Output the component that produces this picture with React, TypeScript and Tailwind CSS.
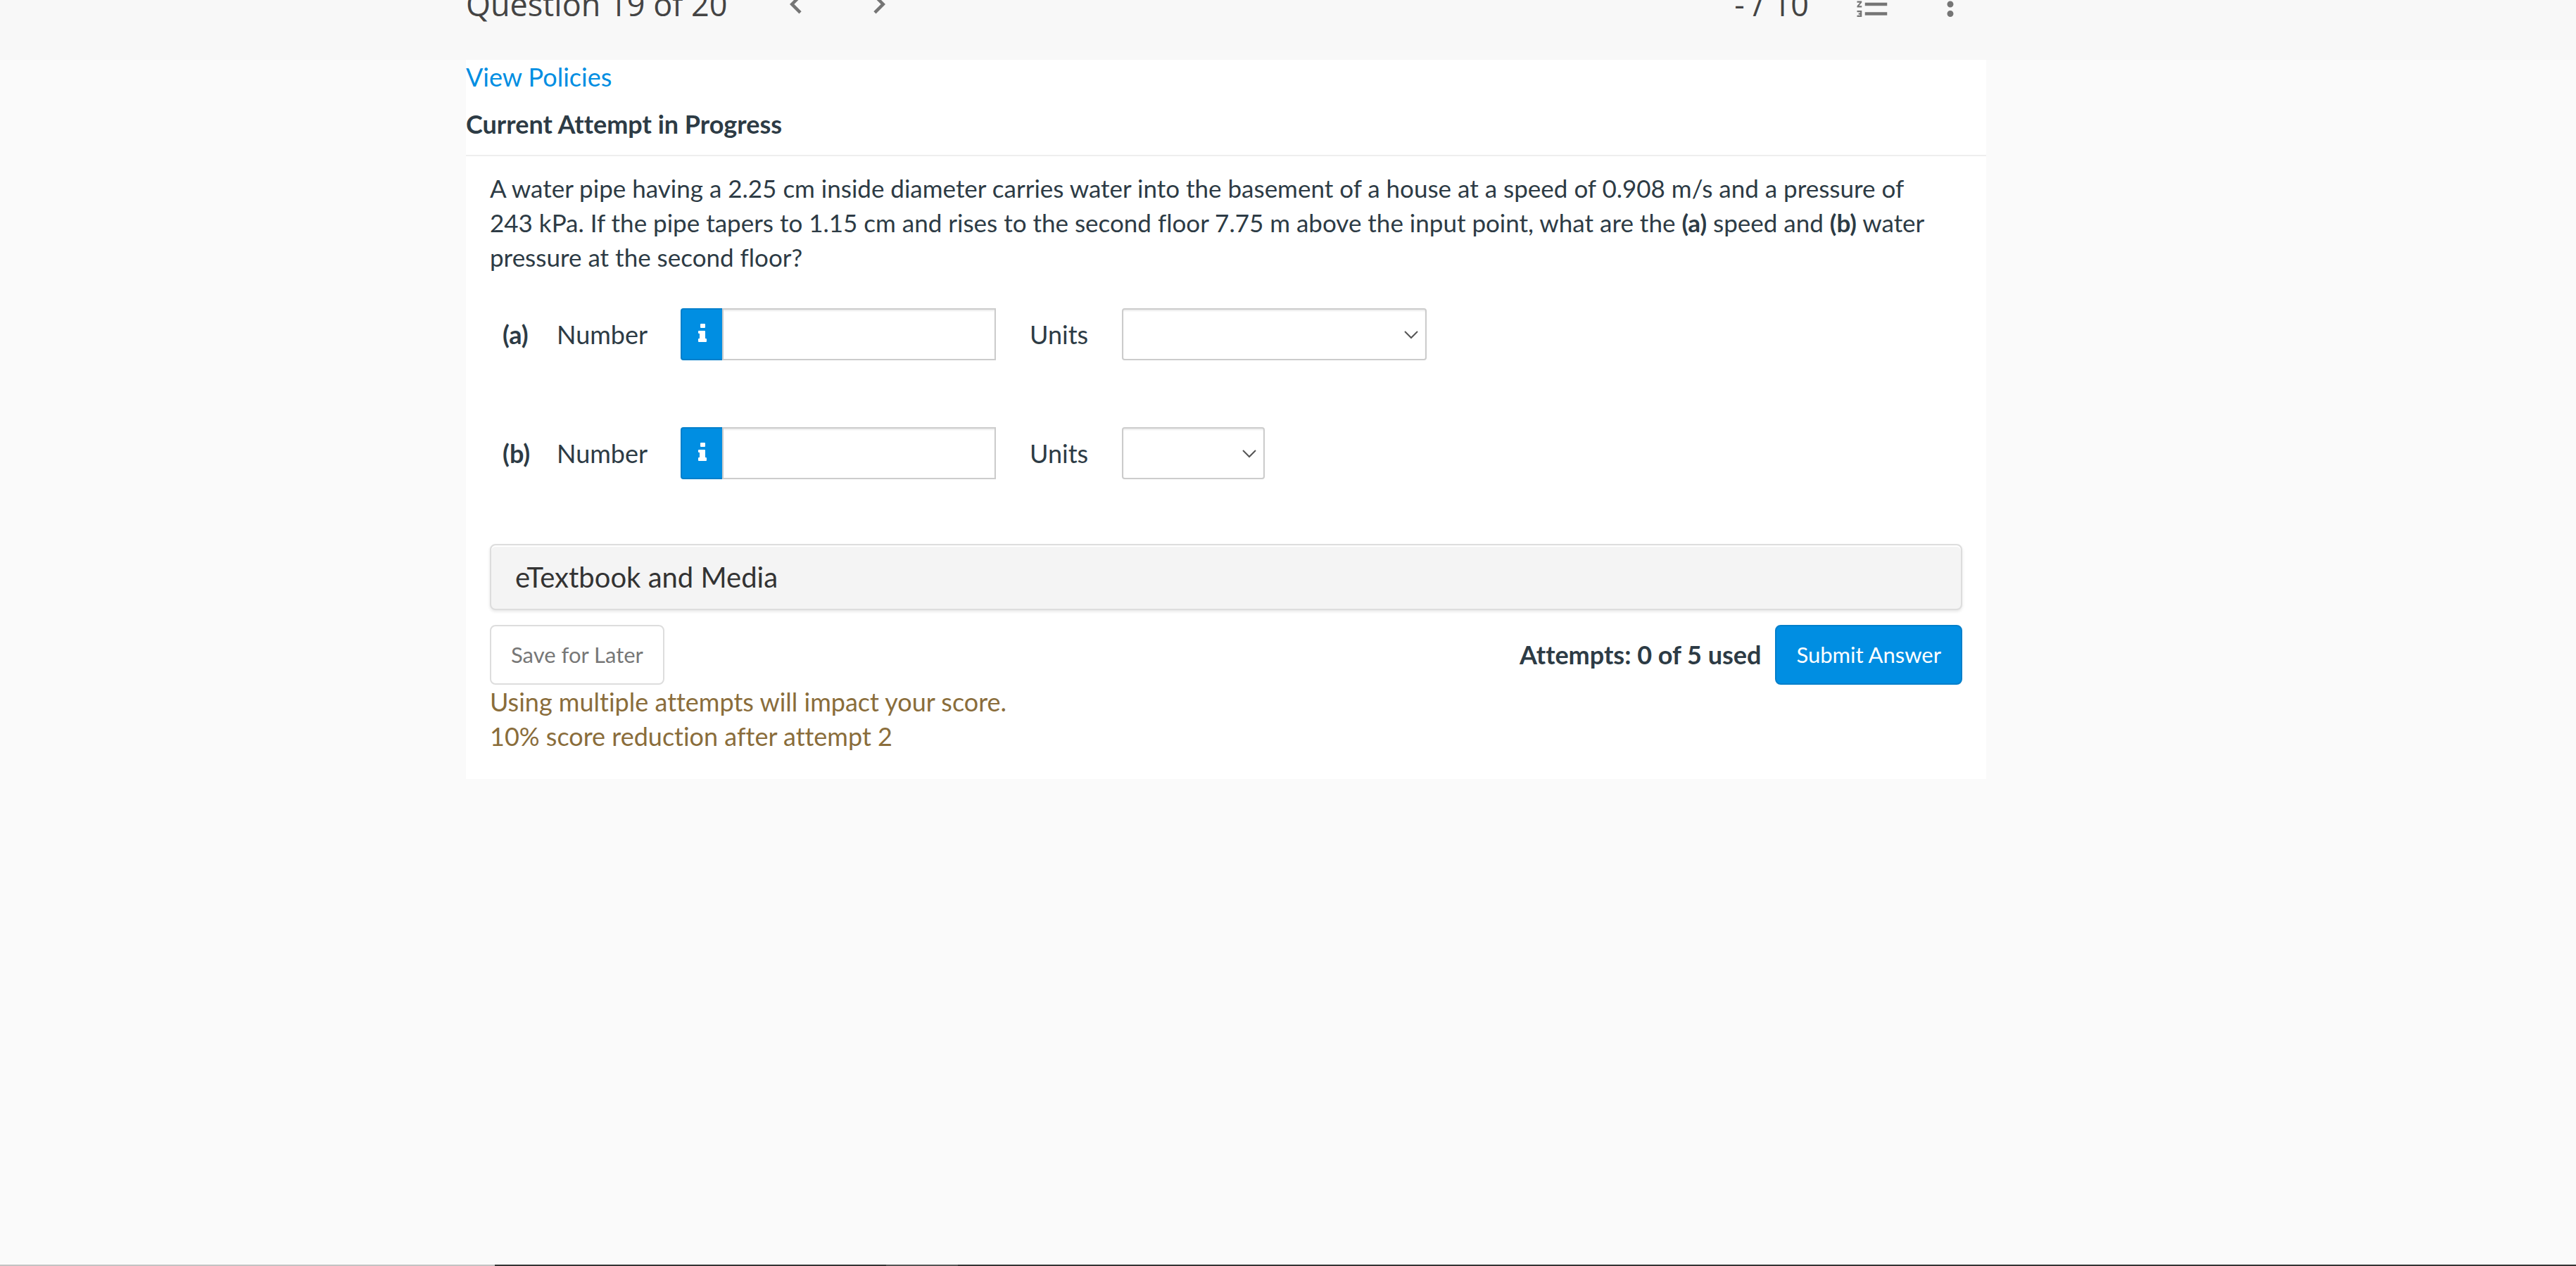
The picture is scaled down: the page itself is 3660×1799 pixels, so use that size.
import { useState } from "react";

const attempts = { used: 0, total: 5 };

const parts = [
  { id: "a", selectClass: "w-[433px]", units: ["", "m/s", "m/s^2", "Pa", "kg/m^3"] },
  { id: "b", selectClass: "w-[203px]", units: ["", "Pa", "N", "m"] },
];

function Chevron({ flip = false }) {
  return (
    <svg
      className={flip ? "h-[54px] w-[54px] rotate-180" : "h-[54px] w-[54px]"}
      viewBox="0 0 24 24"
      fill="currentColor"
    >
      <path d="M15.41 7.41L14 6l-6 6 6 6 1.41-1.41L10.83 12z" />
    </svg>
  );
}

function Header() {
  return (
    <header className="h-[85px] overflow-hidden bg-[#f8f8f8] pr-44">
      <div className="mx-auto -mt-6 flex h-[60px] max-w-[2160px] items-center pr-6 font-['Open_Sans',sans-serif] text-[45px] leading-[60px] text-[#444]">
        <h1>Question 19 of 20</h1>
        <div className="ml-[70px] flex gap-16 text-[#757575]">
          <button type="button" aria-label="Previous question">
            <Chevron />
          </button>
          <button type="button" aria-label="Next question">
            <Chevron flip />
          </button>
        </div>
        <span className="ml-auto">- / 10</span>
        <div className="ml-16 flex gap-14 text-[#757575]">
          <button type="button" aria-label="Question list">
            <svg className="h-[54px] w-[54px]" viewBox="0 0 24 24" fill="currentColor">
              <path d="M2 17h2v.5H3v1h1v.5H2v1h3v-4H2v1zm1-9h1V4H2v1h1v3zm-1 3h1.8L2 13.1v.9h3v-1H3.200l1.800-2.100V10H2v1zm5-6v2h14V5H7zm0 14h14v-2H7v2zm0-6h14v-2H7v2z" />
            </svg>
          </button>
          <button type="button" aria-label="More options">
            <svg className="h-[54px] w-[54px]" viewBox="0 0 24 24" fill="currentColor">
              <path d="M12 8c1.100 0 2-.9 2-2s-.9-2-2-2-2 .9-2 2 .9 2 2 2zm0 2c-1.100 0-2 .9-2 2s.9 2 2 2 2-.9 2-2-.9-2-2-2zm0 6c-1.100 0-2 .9-2 2s.9 2 2 2 2-.9 2-2-.9-2-2-2z" />
            </svg>
          </button>
        </div>
      </div>
    </header>
  );
}

function AnswerRow({ id, units, selectClass }: (typeof parts)[number]) {
  const [value, setValue] = useState("");
  const [unit, setUnit] = useState("");

  return (
    <div className="flex h-[74px] items-center">
      <strong className="w-[77px]">({id})</strong>
      <label htmlFor={"number-" + id} className="w-44">
        Number
      </label>
      <button
        type="button"
        aria-label="Number format"
        className="flex h-[74px] w-[59px] items-center justify-center rounded-l border-y-2 border-l-2 border-[#007fcb] bg-[#008ee2] pb-1 text-white"
      >
        <svg className="h-[26px] w-3" viewBox="0 0 12 26" fill="currentColor">
          <path d="M4 0h5a1 1 0 0 1 1 1v4a1 1 0 0 1-1 1H4a1 1 0 0 1-1-1V1a1 1 0 0 1 1-1zM1 10h8a1 1 0 0 1 1 1v10h1a1 1 0 0 1 1 1v3a1 1 0 0 1-1 1H1a1 1 0 0 1-1-1v-3a1 1 0 0 1 1-1h1v-7H1a1 1 0 0 1-1-1v-2a1 1 0 0 1 1-1z" />
        </svg>
      </button>
      <input
        id={"number-" + id}
        type="text"
        value={value}
        onChange={(e) => setValue(e.target.value)}
        className="h-[74px] w-[389px] border-2 border-[#ccc] bg-white px-3 shadow-[inset_0_2px_2px_rgba(0,0,0,0.075)]"
      />
      <label htmlFor={"units-" + id} className="ml-12 w-[131px]">
        Units
      </label>
      <div className="relative">
        <select
          id={"units-" + id}
          value={unit}
          onChange={(e) => setUnit(e.target.value)}
          className={
            "block h-[74px] appearance-none rounded border-2 border-[#ccc] bg-white px-3 shadow-[inset_0_2px_2px_rgba(0,0,0,0.075)] " +
            selectClass
          }
        >
          {units.map((u) => (
            <option key={u} value={u}>
              {u}
            </option>
          ))}
        </select>
        <svg
          className="pointer-events-none absolute top-8 right-3 h-3 w-5"
          viewBox="0 0 20 12"
          fill="none"
          stroke="#555"
          strokeWidth="2"
        >
          <path d="M1 1l9 9 9-9" />
        </svg>
      </div>
    </div>
  );
}

function App() {
  return (
    <div className="flex min-h-screen flex-col bg-[#fafafa] font-[Lato,sans-serif] text-[36px] leading-[49px] text-[#2d3b45] [font-variant-ligatures:none]">
      <Header />
      <div className="flex-1 pr-44">
        <main className="mx-auto max-w-[2160px] bg-white pb-9">
          <div className="border-b-2 border-[#eee] pb-[19px]">
            <a href="#policies" className="block text-[#008ee2]">
              View Policies
            </a>
            <h2 className="mt-[18px] font-bold">Current Attempt in Progress</h2>
          </div>

          <div className="px-[34px] pt-[21px]">
            <p className="text-[35px]">
              A water pipe having a 2.25 cm inside diameter carries water into
              the basement of a house at a speed of 0.908 m/s and a pressure of
              243&nbsp;kPa. If the pipe tapers to 1.15 cm and rises to the
              second floor 7.75 m above the input point, what are the{" "}
              <strong>(a)</strong> speed and <strong>(b)</strong> water
              pressure at the second floor?
            </p>

            <div className="mt-12 flex flex-col gap-[95px] pl-[18px]">
              {parts.map((part) => (
                <AnswerRow key={part.id} {...part} />
              ))}
            </div>

            <button
              type="button"
              className="mt-[92px] block h-[94px] w-full rounded-lg border-2 border-[#ddd] bg-[#f4f4f4] px-[34px] text-left text-[40px] text-[#333] shadow-[inset_0_2px_0_#fff,0_2px_4px_rgba(0,0,0,0.1)]"
            >
              eTextbook and Media
            </button>

            <div className="mt-[21px] flex items-center">
              <button
                type="button"
                className="h-[85px] rounded-lg border-2 border-[#ddd] bg-white px-7 text-[31px] text-[#777]"
              >
                Save for Later
              </button>
              <strong className="ml-auto">
                Attempts: {attempts.used} of {attempts.total} used
              </strong>
              <button
                type="button"
                className="ml-5 h-[85px] rounded-lg border-2 border-[#007fcb] bg-[#008ee2] px-7 text-[31px] text-white"
              >
                Submit Answer
              </button>
            </div>

            <p className="text-[#8a6d3b]">
              Using multiple attempts will impact your score.
              <br />
              10% score reduction after attempt 2
            </p>
          </div>
        </main>
      </div>

      <footer className="flex h-0.5 bg-[#333]">
        <div className="w-[703px] bg-[#c3c3c3]" />
        <div className="ml-[556px] w-[102px] bg-[#555]" />
      </footer>
    </div>
  );
}

export default App;
